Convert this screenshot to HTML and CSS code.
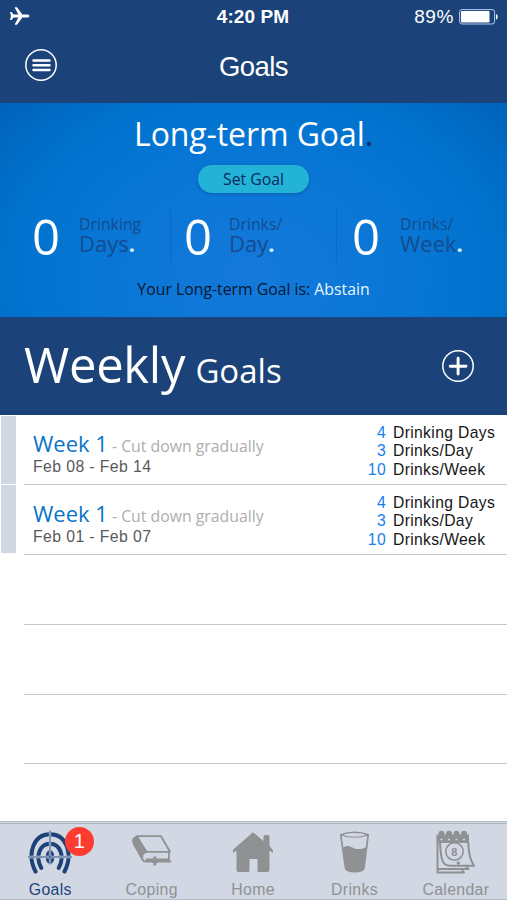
FILE: index.html
```html
<!DOCTYPE html>
<html lang="en">
<head>
<meta charset="utf-8">
<title>Goals</title>
<link rel="stylesheet" href="styles.css">
</head>
<body>
<header class="top">
  <div class="status">
    <svg class="plane" viewBox="0 0 20 18"><path d="M0 5h1.600l2 2.600h4.700L4.600.3h2.400L12.300 7.500h5.300c2.400.3 2.400 2.700 0 3h-5.300l-5.300 7.200H4.600L8.300 10.400H3.600l-2 2.600H0l1-4z"/></svg>
    <span class="time">4:20 PM</span>
    <span class="power">89%
      <svg class="battery" viewBox="0 0 40 16"><rect x=".6" y=".6" width="35" height="14.400" rx="2.500" fill="none" stroke="#b9cdf0"/><rect x="2" y="2" width="28.500" height="11.600" rx="1" fill="#fff"/><path d="M37 5.200c2.300.2 2.300 5 0 5.200z" fill="#fff"/></svg>
    </span>
  </div>
  <nav class="nav">
    <svg class="round" viewBox="0 0 32 32"><circle cx="16" cy="16" r="15.200"/><path class="bars" d="M8.500 11.500h16M8.500 16.200h16M8.500 20.900h16"/></svg>
    <h1>Goals</h1>
  </nav>
</header>
<section class="hero">
  <h2>Long-term Goal<span class="ink">.</span></h2>
  <button class="set">Set Goal</button>
  <div class="stats">
    <div class="stat"><span class="zero">0</span><p><small>Drinking</small><b>Days<i>.</i></b></p></div>
    <div class="stat"><span class="zero">0</span><p><small>Drinks/</small><b>Day<i>.</i></b></p></div>
    <div class="stat"><span class="zero">0</span><p><small>Drinks/</small><b>Week<i>.</i></b></p></div>
  </div>
  <p class="summary">Your Long-term Goal is: <span>Abstain</span></p>
</section>
<section class="weekly">
  <h2><span class="big">Weekly</span> <span class="mid">Goals</span></h2>
  <svg class="round" viewBox="0 0 32 32"><circle cx="16" cy="16" r="15.200"/><path class="plus" d="M8.200 16.200h15.800M16.100 8.300v15.800"/></svg>
</section>
<main class="list">
  <article class="row">
    <div class="body">
      <div><p class="title">Week 1<span> - Cut down gradually</span></p><p class="dates">Feb 08 - Feb 14</p></div>
      <ul><li><b>4</b>Drinking Days</li><li><b>3</b>Drinks/Day</li><li><b>10</b>Drinks/Week</li></ul>
    </div>
  </article>
  <article class="row">
    <div class="body">
      <div><p class="title">Week 1<span> - Cut down gradually</span></p><p class="dates">Feb 01 - Feb 07</p></div>
      <ul><li><b>4</b>Drinking Days</li><li><b>3</b>Drinks/Day</li><li><b>10</b>Drinks/Week</li></ul>
    </div>
  </article>
  <div class="row empty"><div class="body"></div></div>
  <div class="row empty"><div class="body"></div></div>
  <div class="row empty"><div class="body"></div></div>
</main>
<footer class="tabs">
  <a class="tab active">
    <svg viewBox="0 0 44 44"><g fill="none" stroke="#1b4379" stroke-width="4" stroke-linecap="round"><path d="M7.500 41.500C-1.500 24 5.500 4.300 22 4.300S45.500 24 36.500 41.500"/><path d="M13.300 38C6.500 25.500 12.500 13.800 22 13.800S37.500 25.500 30.700 38"/></g><ellipse cx="22" cy="27" rx="4.300" ry="7" fill="#1b4379"/><path d="M22 2v33M1 27h42" stroke="#d2d7e4" stroke-width="2.300"/><path d="M22 .5v34M0 27h44" stroke="#1b4379" stroke-width=".9"/></svg>
    <span>Goals</span><em>1</em>
  </a>
  <a class="tab">
    <svg viewBox="0 0 44 44"><path d="M2 11C2 7.500 5 5.800 8.200 6.500L17 22c-4.500.5-6 4.500-4.500 9.500L3 14.500z" fill="#8f9192"/><g fill="none" stroke="#8f9192" stroke-width="1.800" stroke-linejoin="round" stroke-linecap="round"><path d="M6.500 6.200H31l9 15.600H16.500z"/><path d="M16 22c-5 1-5 9.500 0 9.500h24.500M16.500 29.500H39V22"/></g><path d="M23.300 26.500h3V36l-1.500-1-1.500 1zM22 31h6v2h-6z" fill="#8f9192"/></svg>
    <span>Coping</span>
  </a>
  <a class="tab">
    <svg viewBox="0 0 44 44"><path d="M22 2.200 32.500 11V6.500q0-1.500 1.500-1.500h3q1.500 0 1.500 1.500v9.500l3 3.500q.8 1.500.3 3.500l-3.300-2.500V40q0 2-2 2H28q-1.500 0-1.500-1.500V29h-8v11.500Q18.500 42 17 42H7.500q-2 0-2-2V20.500L2.200 23q-.7-2.500.6-4z" fill="#8f9192"/></svg>
    <span>Home</span>
  </a>
  <a class="tab">
    <svg viewBox="0 0 44 44"><path d="M8.700 4.800c8-3.400 19.500-3.400 27.500 0L32 38c-.6 5-17.800 5-18.500 0z" fill="none" stroke="#8f9192" stroke-width="1.700"/><path d="M9 5c8 3 19 3 27 0" fill="none" stroke="#8f9192" stroke-width="1.200"/><path d="M11 17.500c3-2.200 6-2 9.500 0 4.500 2.500 9 1.800 14-.5L31.800 38.500c-1 4.200-17 4.200-18 0z" fill="#8f9192"/></svg>
    <span>Drinks</span>
  </a>
  <a class="tab">
    <svg viewBox="0 0 44 44"><path d="M2.500 4.500h32.500v8.500H2.500z" fill="#8f9192"/><g fill="#8f9192"><circle cx="7.500" cy="3.800" r="3"/><circle cx="15" cy="3.800" r="3"/><circle cx="22.500" cy="3.800" r="3"/><circle cx="30" cy="3.800" r="3"/></g><path d="M6.500 9.500h2M14 9.500h2M21.500 9.500h2M29 9.500h2" stroke="#d2d7e4" stroke-width="1.300"/><g fill="none" stroke="#8f9192" stroke-width="2" stroke-linejoin="round"><path d="M3.500 12v30.500H30l-2-2.500M4 39h30.500L32 36.500M34.200 12c.3 10 1.300 18 6 23.800H16C9 35.500 7 32 6 13"/><circle cx="20.500" cy="21.500" r="8.700" stroke-width="1.600"/></g><circle cx="24.300" cy="33" r="1.700" fill="#8f9192"/><text class="day" x="17.300" y="25.700">8</text></svg>
    <span>Calendar</span>
  </a>
</footer>
</body>
</html>
```

FILE: styles.css
```css
* { box-sizing: border-box; margin: 0; padding: 0; }
body { width: 507px; height: 900px; overflow: hidden; display: flex; flex-direction: column; background: #fff; font-family: "Open Sans", "Noto Sans", sans-serif; }
h1, h2, b, small, i, em { font-weight: 400; font-style: normal; }

.top { height: 103px; background: #1b4379; color: #fff; font-family: "Liberation Sans", Arial, sans-serif; }
.status { height: 34px; display: grid; grid-template-columns: 1fr auto 1fr; align-items: center; padding: 0 8px 0 10px; }
.plane { width: 20px; height: 18px; margin-top: -2px; fill: #fff; }
.time { margin-left: -3px; font-size: 19px; font-weight: 700; letter-spacing: .1px; }
.power { justify-self: end; display: flex; align-items: center; gap: 5px; font-size: 19px; letter-spacing: .6px; }
.battery { width: 40px; height: 16px; }
.nav { display: flex; align-items: center; height: 62px; padding-left: 25px; }
.nav h1 { flex: 1; margin-right: 57px; text-align: center; font-size: 27.500px; letter-spacing: -.6px; line-height: 62px; padding-top: 4px; }
.round { width: 32px; height: 32px; flex: none; fill: none; stroke: #fff; stroke-width: 1.500px; stroke-linecap: round; }
.bars { stroke-width: 2.500px; }
.plus { stroke-width: 2.900px; }

.hero { height: 214px; display: flex; flex-direction: column; align-items: center; background: radial-gradient(ellipse 350px 270px at 50% 80%, #1479da 0%, #0876d5 45%, #0072cd 70%, #0059b0 112%); }
.hero h2 { height: 62px; line-height: 62px; font-size: 32px; letter-spacing: -.1px; color: #fff; }
.ink { color: #082c66; }
.set { width: 111px; height: 28px; border: 0; border-radius: 14px; background: #23b3d7; color: #092b5c; font: 15.800px/29px "Open Sans", sans-serif; box-shadow: 0 1px 3px #06418a80; }
.stats { width: 100%; margin-top: 17px; height: 50px; display: grid; grid-template-columns: 171px 166px 170px; }
.stat { display: flex; border-right: 1px solid #0e68c2; }
.stat:nth-child(1) { padding-left: 32px; }
.stat:nth-child(2) { padding-left: 13px; }
.stat:nth-child(3) { padding-left: 15px; border: 0; }
.stat p { margin-top: 4px; margin-left: 19px; color: #154b8e; }
.stat:nth-child(2) p { margin-left: 17px; }
.stat:nth-child(3) p { margin-left: 20px; }
.zero { width: 28px; line-height: 53px; font-size: 49px; color: #fff; }
.stat small, .stat b { display: block; }
.stat small { font-size: 15.800px; line-height: 20px; }
.stat b { font-size: 22px; line-height: 18px; }
.stat i { color: #e0f4ff; font-weight: 700; }
.summary { margin-top: 14px; font-size: 15.800px; line-height: 30px; color: #061832; }
.summary span { color: #e8f6ff; }

.weekly { height: 98px; display: flex; align-items: center; justify-content: space-between; padding: 0 33px 0 24px; background: #1b4379; color: #fff; }
.weekly h2 { line-height: 90px; padding-top: 6px; white-space: nowrap; }
.big { font-size: 49px; letter-spacing: -.3px; }
.mid { margin-left: 4px; font-size: 33px; }

.list { height: 406px; padding-top: .5px; overflow: hidden; }
.row { height: 69.750px; padding-left: 24px; background: linear-gradient(90deg, transparent 1px, #d1d6e3 1px, #d1d6e3 16.500px, transparent 16.500px) 0 0 / 100% 68px no-repeat; }
.row.empty { background: none; }
.body { height: 100%; display: flex; justify-content: space-between; border-bottom: 1px solid #c8c8cb; padding-left: 9px; }
.row + .row .body { padding-top: .6px; }
.title { margin-top: 13px; font-size: 22px; line-height: 29px; color: #0874c9; }
.title span { font-size: 15.800px; color: #adadaf; white-space: pre; }
.dates { margin-top: -3px; font: 15.800px/18px "Liberation Sans", Arial, sans-serif; letter-spacing: .4px; color: #59595b; }
.body ul { width: 140px; padding-top: 8px; list-style: none; font: 15.700px/18.500px "Liberation Sans", Arial, sans-serif; letter-spacing: .34px; color: #161618; }
.body li { display: flex; gap: 7px; white-space: nowrap; }
.body li b { width: 19px; text-align: right; color: #1580ee; }

.tabs { height: 79px; display: grid; grid-template-columns: repeat(5, 1fr); padding-top: 2px; border-top: 1px solid #b4bac1; background: linear-gradient(#aeb4bc, #aeb4bc) 0 1px / 100% 1px no-repeat #d2d7e4; border-bottom: 1px solid #b6bcc7; }
.tab { position: relative; display: flex; flex-direction: column; align-items: center; padding: 6px .8px 0 0; color: #8f9192; font: 15.800px/18px "Liberation Sans", Arial, sans-serif; letter-spacing: .35px; }
.tab svg { width: 44px; height: 44px; }
.tab span { margin-top: 7px; }
.active { color: #1b4379; }
.tab em { position: absolute; left: 65px; top: 3px; width: 29px; height: 29px; border-radius: 50%; background: #fd3b30; color: #fff; text-align: center; font-size: 20px; line-height: 29px; }
.day { font: 700 11px "Liberation Sans", sans-serif; fill: #8f9192; }
```
